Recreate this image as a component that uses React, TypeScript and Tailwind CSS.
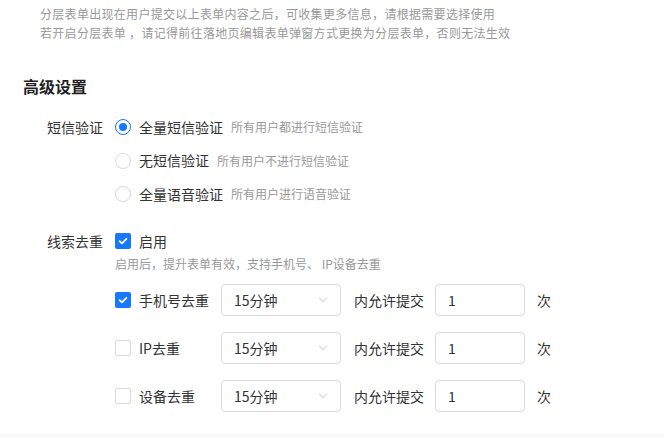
import { ChevronDown } from 'lucide-react'

const font = { fontFamily: '"Noto Sans CJK SC", "Noto Sans", sans-serif' }

function Radio({ checked }: { checked?: boolean }) {
  return (
    <span
      className={`w-4 h-4 rounded-full border flex items-center justify-center shrink-0 bg-white ${
        checked ? 'border-[#1677ff]' : 'border-[#d9d9d9]'
      }`}
    >
      {checked && <span className="w-2 h-2 rounded-full bg-[#1677ff]" />}
    </span>
  )
}

function Checkbox({ checked }: { checked?: boolean }) {
  if (checked) {
    return (
      <span className="w-4 h-4 rounded-[2px] bg-[#1677ff] flex items-center justify-center shrink-0">
        <svg width="10" height="10" viewBox="0 0 10 10" fill="none">
          <path d="M1.6 5.2 L4 7.4 L8.4 2.8" stroke="white" strokeWidth="1.8" strokeLinecap="round" strokeLinejoin="round" />
        </svg>
      </span>
    )
  }
  return <span className="w-4 h-4 rounded-[2px] border border-[#d9d9d9] bg-white shrink-0" />
}

const radios = [
  { label: '全量短信验证', desc: '所有用户都进行短信验证', checked: true },
  { label: '无短信验证', desc: '所有用户不进行短信验证' },
  { label: '全量语音验证', desc: '所有用户进行语音验证' },
]

const dedupe = [
  { label: '手机号去重', checked: true },
  { label: 'IP去重' },
  { label: '设备去重' },
]

export default function App() {
  return (
    <div className="w-[664px] h-[438px] bg-[#fafafa] overflow-hidden" style={font}>
      <div className="h-[433px] bg-white">
        {/* Tips */}
        <div className="pt-[4px] pl-[40px] text-[12px] leading-[19px] tracking-[0.3px] text-[#999]">
          <p>分层表单出现在用户提交以上表单内容之后，可收集更多信息，请根据需要选择使用</p>
          <p>若开启分层表单 ，请记得前往落地页编辑表单弹窗方式更换为分层表单，否则无法生效</p>
        </div>

        <h2 className="mt-[33px] pl-[23px] text-[16px] leading-[22px] font-bold text-[#1f1f1f]">高级设置</h2>

        {/* SMS verification */}
        <div className="mt-[19px] flex">
          <div className="w-[103px] text-right text-[14px] leading-[22px] text-[#333]">短信验证</div>
          <div className="pl-3 flex flex-col gap-[11.5px]">
            {radios.map((r) => (
              <div key={r.label} className="h-[22px] flex items-center">
                <Radio checked={r.checked} />
                <span className="ml-2 text-[14px] text-[#333]">{r.label}</span>
                <span className="ml-[8px] text-[12px] text-[#999]">{r.desc}</span>
              </div>
            ))}
          </div>
        </div>

        {/* Lead dedupe */}
        <div className="mt-[25px] flex">
          <div className="w-[103px] text-right text-[14px] leading-[22px] text-[#333]">线索去重</div>
          <div className="pl-3">
            <div className="h-[22px] flex items-center">
              <Checkbox checked />
              <span className="ml-2 text-[14px] text-[#333]">启用</span>
            </div>
            <p className="mt-[3px] text-[12px] leading-[18px] text-[#999]">启用后，提升表单有效，支持手机号、 IP设备去重</p>
            <div className="mt-[11px] flex flex-col gap-4">
              {dedupe.map((d) => (
                <div key={d.label} className="h-8 flex items-center text-[14px] text-[#333]">
                  <div className="w-[106px] flex items-center">
                    <Checkbox checked={d.checked} />
                    <span className="ml-2">{d.label}</span>
                  </div>
                  <div className="w-[120px] h-8 border border-[#d9d9d9] rounded-[4px] flex items-center justify-between pl-3 pr-[10px]">
                    <span>15分钟</span>
                    <ChevronDown className="w-[14px] h-[14px] text-[#bfbfbf]" strokeWidth={1.5} />
                  </div>
                  <span className="ml-[13px]">内允许提交</span>
                  <div className="ml-[11px] w-[90px] h-8 border border-[#d9d9d9] rounded-[4px] flex items-center pl-3">1</div>
                  <span className="ml-3">次</span>
                </div>
              ))}
            </div>
          </div>
        </div>
      </div>
    </div>
  )
}
